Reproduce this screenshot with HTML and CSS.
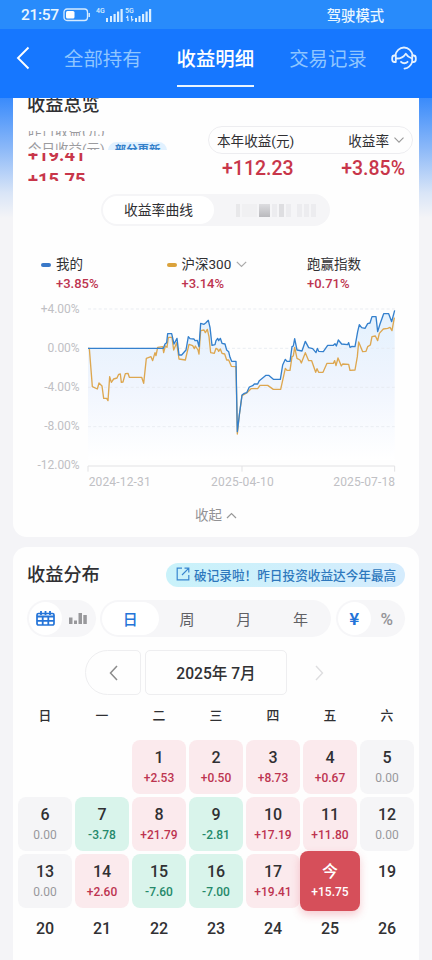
FILE: index.html
```html
<!DOCTYPE html>
<html lang="zh-CN">
<head>
    <meta charset="UTF-8">
    <meta name="viewport" content="width=device-width, initial-scale=1.0">
    <title>收益明细</title>
    <link rel="stylesheet" href="styles.css">
</head>
<body>
    <div class="status">
        <span class="time">21:57</span>
        <svg class="battery" width="28" height="14" viewBox="0 0 28 14">
            <rect x="1" y="1" width="23.5" height="11.5" rx="3" fill="none" stroke="#d5ebff" stroke-width="1.3"/>
            <rect x="3" y="3" width="8.5" height="7.5" rx="1.5" fill="#fff"/>
            <path d="M26.2 5v4" stroke="#d5ebff" stroke-width="1.5"/>
        </svg>
        <svg class="signal" width="58" height="17" viewBox="0 0 58 17">
            <g fill="#d9eeff">
                <text x="0" y="7" class="net">4G</text>
                <text x="29" y="7" class="net">5G</text>
                <path d="M10 12h2v4h-2zM14 10h2v6h-2zM17.500 8h2.200v8h-2.200zM21 5.500h2.200v10.500h-2.200zM24.500 3h2.200v13h-2.200z"/>
                <path d="M39 12h2v4h-2zM42.500 10h2v6h-2zM46 8h2.200v8h-2.200zM49.500 5.500h2.200v10.500h-2.200zM53 3h2.200v13h-2.200z"/>
                <path d="M32 9l-2.300 3h1.600v3h1.400zM35.500 16l2.300-3h-1.600v-3h-1.400z"/>
            </g>
        </svg>
        <span class="mode">驾驶模式</span>
    </div>
    <div class="navbar">
        <svg class="back" width="14" height="24" viewBox="0 0 14 24"><path d="M12.500 1.500L2 12l10.500 10.500" fill="none" stroke="#fff" stroke-width="1.9"/></svg>
        <span class="tab">全部持有</span>
        <span class="tab active">收益明细</span>
        <span class="tab">交易记录</span>
        <svg class="service" width="26" height="25" viewBox="0 0 26 25" fill="none" stroke="#e4f1ff" stroke-width="1.8" stroke-linecap="round" stroke-linejoin="round">
            <path d="M4.300 9.500C5 5 8.500 1.500 13 1.500S21 5 21.700 9.500"/>
            <path d="M4.800 9.500H3.500C2 9.500 1.200 10.600 1.200 12v1.500c0 1.500.8 2.500 2.300 2.500h1.300zM21.200 9.500h1.300c1.500 0 2.300 1.100 2.300 2.500v1.500c0 1.500-.8 2.500-2.300 2.500h-1.300z"/>
            <path d="M5 12.500c3.500.2 7.500-1.300 9.800-4.800 1.500 2.600 3.500 4 6.200 4.800"/>
            <path d="M10 15.800c1.800 1.900 4.800 1.900 6.600 0M21 16.500c-1.200 3.200-3.800 5.600-7.500 6.200"/>
        </svg>
    </div>

    <div class="main">
        <div class="card overview">
            <h2 class="title">收益总览</h2>
            <div class="summary">
                <div class="rolling">
                    <div class="slice label-out"><span>昨日收益(元)</span></div>
                    <div class="slice label-in"><span>今日收益(元)</span><b>部分更新</b></div>
                    <div class="slice num-out"><span>+19.41</span></div>
                    <div class="slice num-in"><span>+15.75</span></div>
                </div>
                <div class="year">
                    <div class="year-head">
                        <span>本年收益(元)</span>
                        <span>收益率<svg width="10" height="6" viewBox="0 0 10 6"><path d="M.5.700L5 5.200 9.500.700" fill="none" stroke="#999" stroke-width="1.100"/></svg></span>
                    </div>
                    <div class="year-num"><span>+112.23</span><span>+3.85%</span></div>
                </div>
            </div>
            <div class="switch">
                <span class="on">收益率曲线</span>
                <span class="mosaic"><i></i><i></i><i></i><i></i><i></i><i></i><i></i><i></i><i></i></span>
            </div>
            <div class="legend">
                <div class="item blue"><p>我的</p><em>+3.85%</em></div>
                <div class="item gold"><p>沪深300<svg width="11" height="7" viewBox="0 0 11 7"><path d="M.8.800l4.700 4.700L10.200.800" fill="none" stroke="#aaa" stroke-width="1.200"/></svg></p><em>+3.14%</em></div>
                <div class="item"><p>跑赢指数</p><em>+0.71%</em></div>
            </div>
            <svg class="chart" width="406" height="200" viewBox="39 165 1218 600">
                <defs>
                    <linearGradient id="area" x1="0" y1="211" x2="0" y2="660" gradientUnits="userSpaceOnUse">
                        <stop offset="0" stop-color="#e3f1fd"/>
                        <stop offset=".5" stop-color="#f0f5fe"/>
                        <stop offset="1" stop-color="#fff"/>
                    </linearGradient>
                </defs>
                <path fill="url(#area)" d="M264 325H490L495 312 500 308 503 281H515L522 312 531 295 537 345H545L558 330 565 290 570 296 582 297 585 302 592 301 597 320 602 250 612 253 617 249 625 241 630 262 636 316 645 314 648 302 653 295 656 302 661 295 666 310 675 312 680 330 686 335 690 352 695 364H708L712 575 718 525 726 465 733 460 740 458 748 441 758 437 763 432H773L778 422 798 406H806L813 412 820 418H841L848 375 856 358 861 364H870L876 320 880 318 884 296 891 330 906 333 916 304 926 323 938 326 948 338 952 325 956 334 970 335 983 316H1000L1005 311 1009 318 1015 300 1025 312 1043 314 1046 308 1050 322 1056 319 1065 320 1073 275 1078 254 1085 263 1095 265 1103 251 1110 249 1116 230H1128L1133 275 1140 252 1151 221H1166L1175 245 1184 211V660H264Z"/>
                <g class="grid-lines">
                    <path d="M264 207H1184M264 325H1184M264 442H1184M264 560H1184"/>
                </g>
                <path d="M264 695V678H1184V695M726 678V695" fill="none" stroke="#e2e2e4" stroke-width="3"/>
                <polyline class="line gold-line" points="264,325 268,325 277,440 292,447 297,429 306,438 311,475 320,475 324,482 329,410 334,427 341,417 351,414 356,403 361,402 364,427 369,426 376,401 384,400 388,412 425,412 431,430 439,355 453,350 458,362 465,338 468,347 473,322 488,320 491,338 496,318 501,322 505,292 516,292 521,330 530,308 537,357 556,360 567,313 578,317 583,326 586,318 594,330 597,342 602,272 612,270 616,278 622,268 627,290 632,338 643,340 648,325 653,328 656,334 661,327 666,340 674,342 680,360 686,360 694,379 708,380 712,582 718,525 726,467 740,459 753,446 773,446 780,436 803,436 820,448 842,448 856,385 861,391 870,391 876,350 880,348 884,322 891,355 900,360 904,369 916,338 926,362 935,362 947,397 951,386 956,397 969,397 981,370 1000,370 1004,362 1008,377 1014,354 1024,378 1028,372 1046,373 1050,391 1065,390 1072,350 1076,306 1088,335 1098,334 1103,320 1111,315 1116,290 1126,288 1133,302 1138,280 1150,267 1163,265 1170,262 1176,272 1183,233"/>
                <polyline class="line blue-line" points="264,325 490,325 495,312 500,308 503,281 515,281 522,312 531,295 537,345 545,345 558,330 565,290 570,296 582,297 585,302 592,301 597,320 602,250 612,253 617,249 625,241 630,262 636,316 645,314 648,302 653,295 656,302 661,295 666,310 675,312 680,330 686,335 690,352 695,364 708,364 712,575 718,525 726,465 733,460 740,458 748,441 758,437 763,432 773,432 778,422 798,406 806,406 813,412 820,418 841,418 848,375 856,358 861,364 870,364 876,320 880,318 884,296 891,330 906,333 916,304 926,323 938,326 948,338 952,325 956,334 970,335 983,316 1000,316 1005,311 1009,318 1015,300 1025,312 1043,314 1046,308 1050,322 1056,319 1065,320 1073,275 1078,254 1085,263 1095,265 1103,251 1110,249 1116,230 1128,230 1133,275 1140,252 1151,221 1166,221 1175,245 1184,211"/>
                <g class="axis" text-anchor="end">
                    <text x="239" y="218">+4.00%</text>
                    <text x="239" y="335">0.00%</text>
                    <text x="239" y="453">-4.00%</text>
                    <text x="239" y="570">-8.00%</text>
                    <text x="239" y="688">-12.00%</text>
                </g>
                <g class="axis">
                    <text x="266" y="738" textLength="186">2024-12-31</text>
                    <text x="633" y="738" textLength="188">2025-04-10</text>
                    <text x="1000" y="738" textLength="185">2025-07-18</text>
                </g>
            </svg>
            <div class="fold">收起<svg width="11" height="7" viewBox="0 0 11 7"><path d="M1 6l4.500-4.500L10 6" fill="none" stroke="#999" stroke-width="1.200"/></svg></div>
        </div>

        <div class="card spread">
            <div class="spread-head">
                <h2 class="title">收益分布</h2>
                <div class="notice">
                    <svg width="14" height="14" viewBox="0 0 14 14" fill="none" stroke="#3886d0" stroke-width="1.200"><path d="M6 1.200H1.200v11.600h11.600V8M8.500 1.200h4.300v4.300M12.600 1.400L6 8"/></svg>
                    破记录啦！昨日投资收益达今年最高
                </div>
            </div>
            <div class="filters">
                <div class="group small">
                    <span class="on">
                        <svg width="19" height="15" viewBox="0 0 19 15"><path d="M2.500 2.500h14a1.500 1.500 0 011.500 1.500v8.500a1.500 1.500 0 01-1.500 1.500h-14A1.500 1.500 0 011 12.500V4a1.500 1.500 0 011.500-1.500z" fill="none" stroke="#2474d8" stroke-width="1.700"/><path d="M1 5.500h17M1 9.800h17M6.700 5.500v8.500M12.300 5.500v8.500M5 0v4M9.500 0v4M14 0v4" fill="none" stroke="#2474d8" stroke-width="1.800"/></svg>
                    </span>
                    <span>
                        <svg width="18" height="13" viewBox="0 0 18 13" fill="#98989b"><path d="M0 5.500h3.500V12H0zM5 8.500h3V12H5zM9.500 1H13v11H9.500zM14.300 3h3.500v9h-3.500z"/></svg>
                    </span>
                </div>
                <div class="group period"><span class="on">日</span><span>周</span><span>月</span><span>年</span></div>
                <div class="group small unit"><span class="on">¥</span><span>%</span></div>
            </div>
            <div class="month">
                <span class="prev"><svg width="9" height="16" viewBox="0 0 9 16"><path d="M8 1L1.500 8 8 15" fill="none" stroke="#8b8b8b" stroke-width="1.500"/></svg></span>
                <span class="current">2025年 7月</span>
                <span class="next"><svg width="9" height="16" viewBox="0 0 9 16"><path d="M1 1l6.500 7L1 15" fill="none" stroke="#dedee0" stroke-width="1.400"/></svg></span>
            </div>
            <div class="week"><span>日</span><span>一</span><span>二</span><span>三</span><span>四</span><span>五</span><span>六</span></div>
            <div class="days">
                <div class="day"></div>
                <div class="day"></div>
                <div class="day up">1<em>+2.53</em></div>
                <div class="day up">2<em>+0.50</em></div>
                <div class="day up">3<em>+8.73</em></div>
                <div class="day up">4<em>+0.67</em></div>
                <div class="day flat">5<em>0.00</em></div>
                <div class="day flat">6<em>0.00</em></div>
                <div class="day down">7<em>-3.78</em></div>
                <div class="day up">8<em>+21.79</em></div>
                <div class="day down">9<em>-2.81</em></div>
                <div class="day up">10<em>+17.19</em></div>
                <div class="day up">11<em>+11.80</em></div>
                <div class="day flat">12<em>0.00</em></div>
                <div class="day flat">13<em>0.00</em></div>
                <div class="day up">14<em>+2.60</em></div>
                <div class="day down">15<em>-7.60</em></div>
                <div class="day down">16<em>-7.00</em></div>
                <div class="day up">17<em>+19.41</em></div>
                <div class="day today">今<em>+15.75</em></div>
                <div class="day">19</div>
                <div class="day">20</div>
                <div class="day">21</div>
                <div class="day">22</div>
                <div class="day">23</div>
                <div class="day">24</div>
                <div class="day">25</div>
                <div class="day">26</div>
            </div>
        </div>
    </div>
</body>
</html>
```

FILE: styles.css
```css
* {
    box-sizing: border-box;
}
body {
    margin: 0;
    height: 960px;
    overflow: hidden;
    display: flex;
    flex-direction: column;
    background: #f4f4f7;
    color: #303033;
    font-family: Roboto, "Noto Sans CJK SC", sans-serif;
}
svg {
    display: block;
    flex: none;
}
em {
    font-style: normal;
}
.status {
    height: 29px;
    flex: none;
    display: flex;
    align-items: center;
    padding: 0 48px 0 21px;
    background: #288bfb;
    color: #e9f6ff;
}
.time {
    width: 42px;
    font-size: 15.5px;
    font-weight: 500;
    white-space: nowrap;
    letter-spacing: -0.3px;
}
.signal {
    margin: 0 0 0 5px;
}
.net {
    font-size: 7px;
    font-weight: 500;
}
.mode {
    margin-left: auto;
    padding-bottom: 1px;
    font-size: 14.3px;
    font-weight: 500;
}
.navbar {
    height: 69px;
    flex: none;
    display: flex;
    align-items: center;
    padding: 0 15px 11px 16px;
    background: #1677ff;
}
.tab {
    height: 58px;
    padding-top: 2px;
    line-height: 58px;
    font-size: 19.4px;
    color: #8fc6ff;
    white-space: nowrap;
    margin-left: 35px;
}
.back + .tab {
    margin-left: 34px;
}
.tab.active {
    color: #fff;
    font-weight: 500;
    background: linear-gradient(#e9f5ff, #e9f5ff) 0 56px / 100% 2px no-repeat;
}
.service {
    margin-left: auto;
}
.main {
    flex: 1;
    padding: 0 13px;
    background: linear-gradient(#3a8bfb 0, #8bb8f8 50px, #d9e5f7 95px, #f4f4f7 120px);
}
.card {
    background: #fefefe;
}
.title {
    margin: 0;
    font-size: 18.2px;
    font-weight: 500;
    line-height: 24px;
}
.overview {
    height: 439px;
    border-radius: 0 0 14px 14px;
    overflow: hidden;
}
.overview .title {
    margin: -5px 0 9px 14px;
}
.summary {
    display: flex;
    justify-content: space-between;
    height: 68px;
    padding: 0 6px 0 15px;
}
/* labels and numbers caught half way through the roll */
.rolling {
    padding-top: 5px;
}
.slice {
    overflow: hidden;
    display: flex;
    white-space: nowrap;
    font-size: 13.5px;
    line-height: 15px;
    color: #9b9b9e;
}
.label-out {
    height: 5px;
    align-items: flex-end;
}
.label-out span {
    margin-bottom: -3px;
}
.label-in {
    height: 8px;
    margin-top: 6px;
    align-items: flex-start;
}
.label-in b {
    margin-left: 3px;
    padding: 0 7px;
    font-size: 11.4px;
    font-weight: 700;
    line-height: 17px;
    color: #337fc9;
    background: #e1f1ff;
    border-radius: 9px;
}
.num-out,
.num-in {
    height: 8px;
    color: #c8364a;
    font-size: 18.4px;
    font-weight: 700;
    line-height: 13px;
}
.num-out {
    margin-top: 3px;
    align-items: flex-end;
}
.num-in {
    margin-top: 12px;
    align-items: flex-start;
}
.year {
    width: 205px;
}
.year-head {
    height: 28px;
    display: flex;
    align-items: center;
    justify-content: space-between;
    padding: 0 8px;
    border: 1px solid #ededf0;
    border-radius: 14px;
    font-size: 13.6px;
}
.year-head span {
    display: flex;
    align-items: center;
    gap: 5px;
}
.year-num {
    display: flex;
    justify-content: space-between;
    padding: 3px 8px 0 14px;
    font-size: 19.5px;
    line-height: 23px;
    font-weight: 500;
    color: #c8364a;
}
.switch {
    display: flex;
    width: 229px;
    height: 32px;
    margin-left: 88px;
    padding: 2px;
    border-radius: 16px;
    background: #f5f5f7;
}
.switch .on {
    width: 111px;
    border-radius: 14px;
    background: #fff;
    text-align: center;
    font-size: 13.8px;
    line-height: 29px;
}
.mosaic {
    display: flex;
    gap: 2px;
    align-items: center;
    padding-left: 22px;
}
.mosaic i {
    width: 5px;
    height: 13px;
    background: #ececef;
}
.mosaic i:nth-child(1) {
    width: 4px;
    background: #e8e8ea;
}
.mosaic i:nth-child(2) {
    width: 15px;
    background: #f0f0f2;
}
.mosaic i:nth-child(3) {
    width: 11px;
    background: linear-gradient(#dddde0, #b9b9bd);
}
.mosaic i:nth-child(5) {
    background: #dedee1;
}
.mosaic i:nth-child(6) {
    margin-right: 4px;
}
.legend {
    display: flex;
    margin-top: 28px;
    padding-left: 28px;
}
.legend .item {
    position: relative;
    width: 125.5px;
    padding-left: 15px;
}
.legend p {
    display: flex;
    align-items: center;
    gap: 5px;
    margin: 0;
    font-size: 13.5px;
    line-height: 21px;
}
.legend em {
    display: block;
    font-size: 13px;
    font-weight: 500;
    line-height: 18px;
    color: #bd3450;
}
.legend .blue::before,
.legend .gold::before {
    content: "";
    position: absolute;
    left: 0;
    top: 9px;
    width: 10px;
    height: 4px;
    border-radius: 2px;
    background: #3978c8;
}
.legend .gold::before {
    background: #daa23c;
}
.chart {
    margin-top: 2px;
}
.grid-lines path {
    stroke: #e6e9ef;
    stroke-width: 2.5;
    stroke-dasharray: 9 7;
}
.line {
    fill: none;
    stroke-width: 4;
    stroke-linejoin: round;
}
.gold-line {
    stroke: #dda750;
}
.blue-line {
    stroke: #3480cd;
}
.axis text {
    font-size: 36px;
    fill: #c0c0c4;
}
.fold {
    display: flex;
    justify-content: center;
    align-items: center;
    gap: 4px;
    margin-top: 9px;
    font-size: 13.5px;
    line-height: 22px;
    color: #929295;
}
.spread {
    height: 430px;
    margin-top: 10px;
    border-radius: 14px;
}
.spread-head {
    display: flex;
    align-items: center;
    justify-content: space-between;
    height: 53px;
    padding: 2px 14px 0 14px;
}
.notice {
    display: flex;
    align-items: center;
    gap: 4px;
    width: 239px;
    height: 24px;
    padding: 0 0 1px 10px;
    border-radius: 12px;
    background: linear-gradient(90deg, #c9f2fa, #d5ecfd);
    color: #2e78bd;
    font-size: 12.65px;
    font-weight: 500;
    white-space: nowrap;
}
.filters {
    display: flex;
    gap: 4px;
    padding: 0 14px;
}
.group {
    display: flex;
    height: 37px;
    padding: 2px;
    border-radius: 19px;
    background: #f6f6f8;
}
.group span {
    flex: 1;
    display: flex;
    align-items: center;
    justify-content: center;
    padding-bottom: 1px;
    border-radius: 17px;
    color: #606064;
    font-size: 15px;
}
.group .on {
    background: #fff;
    color: #2474d8;
    font-weight: 500;
}
.group.small {
    width: 69px;
}
.group.period {
    width: 231px;
}
.group.unit {
    margin-left: 1px;
}
.group.unit span {
    padding: 0;
    font-size: 17px;
    font-weight: 500;
    color: #939397;
}
.group.unit .on {
    padding-bottom: 3px;
    font-family: "Noto Sans CJK SC", sans-serif;
    font-weight: 700;
    color: #2474d8;
}
.month {
    display: flex;
    gap: 4px;
    height: 45px;
    margin: 13px 0 0 72px;
}
.month span {
    display: flex;
    align-items: center;
    justify-content: center;
    border: 1px solid #eeeef0;
    border-radius: 5px;
}
.month .prev {
    width: 56px;
    border-radius: 23px 5px 5px 23px;
}
.month .current {
    width: 142px;
    padding-bottom: 2px;
    font-size: 15.6px;
    font-weight: 500;
}
.month .next {
    width: 56px;
    border-color: transparent;
}
.week,
.days {
    display: grid;
    grid-template-columns: repeat(7, 54px);
    gap: 3px;
    padding-left: 5px;
}
.week {
    padding-top: 9px;
    height: 45px;
    text-align: center;
    font-size: 12.8px;
    font-weight: 500;
    line-height: 23px;
}
.day {
    height: 54px;
    padding-top: 8px;
    border-radius: 8px;
    text-align: center;
    font-size: 16px;
    font-weight: 500;
    line-height: 20px;
}
.day em {
    display: block;
    font-size: 12px;
    line-height: 21px;
}
.up {
    background: #fbeaed;
}
.up em {
    color: #bd3450;
}
.down {
    background: #d9f4eb;
}
.down em {
    color: #25896a;
}
.flat {
    background: #f5f5f7;
}
.flat em {
    color: #98989c;
    font-weight: 400;
}
.today {
    height: 60px;
    margin: -3px -3px;
    padding-top: 11px;
    background: #d64f5a;
    color: #fff;
    box-shadow: 0 4px 8px rgba(230, 90, 105, 0.3);
}
```
